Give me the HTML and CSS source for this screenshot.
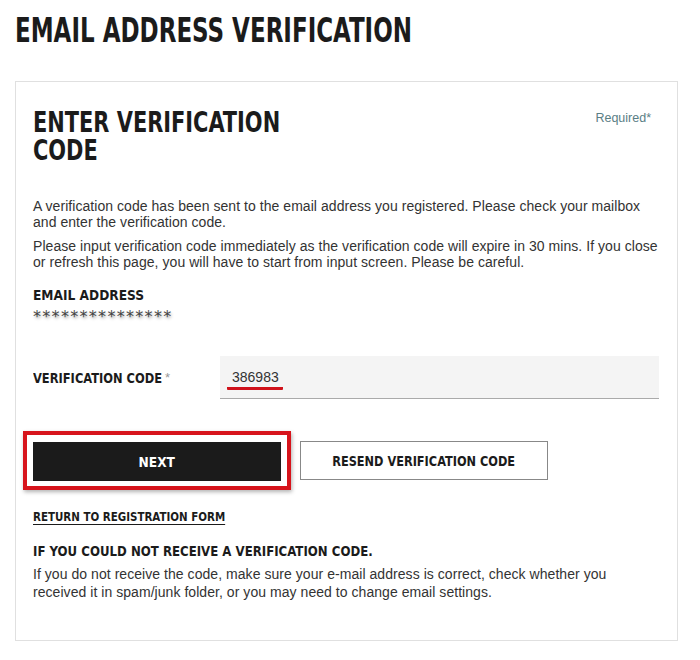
FILE: index.html
```html
<!DOCTYPE html>
<html>
<head>
<meta charset="utf-8">
<link rel="stylesheet" href="styles.css">
</head>
<body>
<div class="page">
  <h1 class="title"><span class="cond title-text">EMAIL ADDRESS VERIFICATION</span></h1>
  <div class="card">
    <div class="card-head">
      <h2 class="subtitle"><span class="cond sub-text">ENTER VERIFICATION</span><span class="cond sub-text">CODE</span></h2>
      <span class="required">Required*</span>
    </div>
    <p class="text intro">A verification code has been sent to the email address you registered. Please check your mailbox and enter the verification code.</p>
    <p class="text second">Please input verification code immediately as the verification code will expire in 30 mins. If you close or refresh this page, you will have to start from input screen. Please be careful.</p>
    <div class="label"><span class="cond label-text">EMAIL ADDRESS</span></div>
    <div class="stars">***************</div>
    <div class="code-row">
      <div class="code-label"><span class="cond code-text">VERIFICATION CODE</span><span class="ast">*</span></div>
      <div class="code-input"><span class="code-value">386983</span></div>
    </div>
    <div class="buttons">
      <div class="highlight"><button class="btn btn-primary"><span class="cond btn-text next-text">NEXT</span></button></div>
      <button class="btn btn-secondary"><span class="cond btn-text resend-text">RESEND VERIFICATION CODE</span></button>
    </div>
    <div class="return-row"><a class="return-link" href="#"><span class="cond return-text">RETURN TO REGISTRATION FORM</span></a></div>
    <h3 class="help-title"><span class="cond help-text">IF YOU COULD NOT RECEIVE A VERIFICATION CODE.</span></h3>
    <p class="text help-body">If you do not receive the code, make sure your e-mail address is correct, check whether you received it in spam/junk folder, or you may need to change email settings.</p>
  </div>
</div>
</body>
</html>
```
FILE: styles.css
```css
html, body {
  margin: 0;
  padding: 0;
  background: #fff;
}
body {
  font-family: "Liberation Sans", Arial, sans-serif;
  color: #333;
}
.page {
  padding: 12px 22px 0 15px;
}
.cond {
  display: inline-block;
  font-family: "DejaVu Sans Condensed", "DejaVu Sans", sans-serif;
  font-weight: bold;
  white-space: nowrap;
  transform-origin: left center;
}
.title {
  margin: 0;
  font-size: 33px;
  line-height: 38px;
  color: #1b1b1b;
}
.title-text {
  transform: scaleX(0.775);
}
.card {
  margin-top: 31px;
  border: 1px solid #e0e0e0;
  height: 560px;
  padding: 0 18px 0 17px;
  box-sizing: border-box;
}
.card-head {
  display: flex;
  justify-content: space-between;
  align-items: flex-start;
  padding-top: 27px;
}
.subtitle {
  margin: 0;
  font-size: 28px;
  line-height: 28px;
  color: #1b1b1b;
  display: flex;
  flex-direction: column;
  align-items: flex-start;
}
.sub-text {
  transform: scaleX(0.83);
  line-height: 28px;
  height: 28px;
}
.required {
  font-size: 12.5px;
  color: #5a7e85;
  margin-top: 2px;
  margin-right: 8px;
}
.text {
  margin: 0;
  font-size: 14px;
  line-height: 16px;
  letter-spacing: 0.05px;
  color: #333;
}
.intro {
  margin-top: 33px;
}
.second {
  margin-top: 8px;
}
.label {
  margin-top: 17px;
  font-size: 14px;
  line-height: 16px;
  color: #1b1b1b;
}
.label-text {
  transform: scaleX(0.97);
}
.stars {
  margin-top: 7px;
  font-family: "DejaVu Sans", sans-serif;
  font-size: 16px;
  line-height: 14px;
  height: 12px;
  color: #444;
  letter-spacing: 1.3px;
  text-shadow: 1px 2px 3px rgba(0,0,0,0.3);
}
.code-row {
  display: flex;
  align-items: center;
  margin-top: 34px;
}
.code-label {
  width: 187px;
  font-size: 14px;
  color: #1b1b1b;
  display: flex;
  align-items: flex-start;
}
.code-text {
  transform: scaleX(0.91);
  width: 132px;
}
.ast {
  color: #999;
  font-size: 13px;
  line-height: 13px;
  margin-top: 1px;
}
.code-input {
  flex: 1;
  height: 43px;
  background: #f4f4f4;
  border-bottom: 1px solid #aaa;
  box-sizing: border-box;
  padding-left: 7px;
  display: flex;
  align-items: center;
}
.code-value {
  font-size: 14px;
  line-height: 15px;
  color: #333;
  padding: 0 4px 2px 5px;
  border-bottom: 3px solid #d0121b;
  margin-top: 5px;
  border-radius: 1px;
}
.buttons {
  display: flex;
  align-items: center;
  gap: 9px;
  margin-top: 32px;
  margin-left: -10px;
}
.highlight {
  border: 4px solid #d7141c;
  padding: 7px 6px 5px 6px;
  box-shadow: 1px 2px 4px rgba(0,0,0,0.3);
}
.btn {
  font-size: 14px;
  height: 39px;
  box-sizing: border-box;
  cursor: pointer;
  display: flex;
  align-items: center;
  justify-content: center;
  padding: 0;
}
.btn-text {
  transform-origin: center center;
}
.next-text {
  transform: scaleX(0.97);
}
.resend-text {
  transform: scaleX(0.9);
}
.btn-primary {
  width: 248px;
  background: #1b1b1b;
  color: #fff;
  border: none;
}
.btn-secondary {
  width: 248px;
  background: #fff;
  color: #1b1b1b;
  border: 1px solid #888;
}
.return-row {
  margin-top: 18px;
  line-height: 16px;
}
.return-link {
  font-size: 12.5px;
  color: #1b1b1b;
  text-decoration: none;
}
.return-text {
  transform: scaleX(0.915);
  border-bottom: 1px solid #1b1b1b;
  line-height: 14px;
}
.help-title {
  margin: 17px 0 0 0;
  font-size: 13.5px;
  line-height: 18px;
  color: #1b1b1b;
}
.help-text {
  transform: scaleX(0.97);
}
.help-body {
  margin-top: 4px;
  line-height: 18px;
  max-width: 612px;
}
```
